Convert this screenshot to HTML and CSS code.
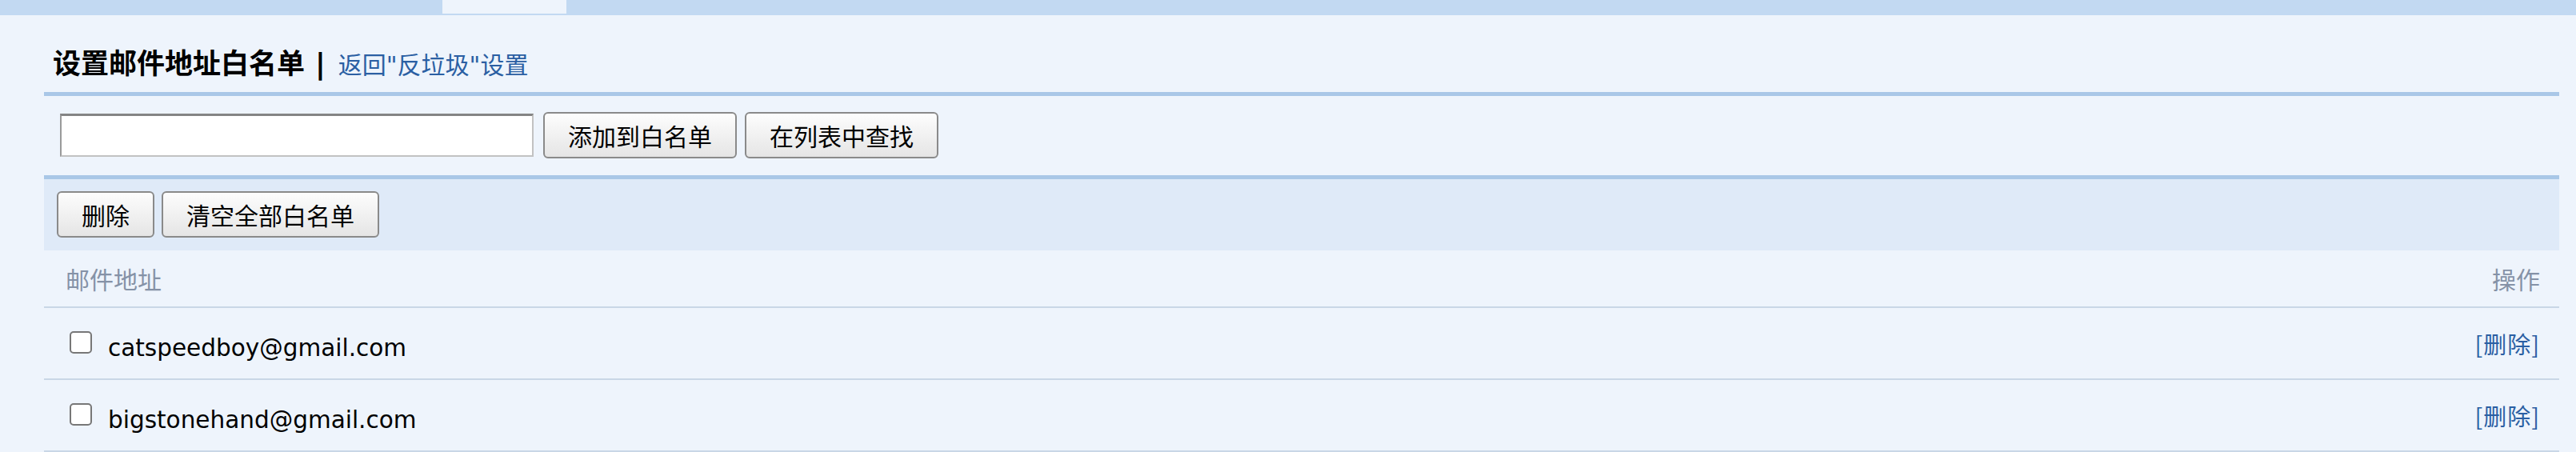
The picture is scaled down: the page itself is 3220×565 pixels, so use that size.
FILE: index.html
```html
<!DOCTYPE html>
<html lang="zh-CN">
<head>
<meta charset="UTF-8">
<title>设置邮件地址白名单</title>
<link rel="stylesheet" href="styles.css">
</head>
<body>

<div class="topbar">
    <div class="tab"></div>
</div>

<div class="main">
    <div class="page-title">
        <b>设置邮件地址白名单</b><span class="sep">|</span><a href="#">返回"反垃圾"设置</a>
    </div>

    <form class="add-bar">
        <input type="text" class="addr-input">
        <button type="button">添加到白名单</button>
        <button type="button">在列表中查找</button>
    </form>

    <div class="toolbar">
        <button type="button">删除</button>
        <button type="button">清空全部白名单</button>
    </div>

    <div class="list">
        <div class="list-head">
            <span>邮件地址</span>
            <span>操作</span>
        </div>
        <div class="list-row">
            <label class="addr"><input type="checkbox"><span class="addr-text">catspeedboy@gmail.com</span></label>
            <a href="#" class="del">[删除]</a>
        </div>
        <div class="list-row">
            <label class="addr"><input type="checkbox"><span class="addr-text">bigstonehand@gmail.com</span></label>
            <a href="#" class="del">[删除]</a>
        </div>
    </div>
</div>

</body>
</html>
```

FILE: styles.css
```css
body {
    margin: 0;
    padding: 0;
    background-color: #eef4fc;
    font-family: "DejaVu Sans", "Noto Sans CJK SC", sans-serif;
    font-size: 30px;
    color: #000;
}
a {
    color: #2b5fa3;
    text-decoration: none;
}
.topbar {
    height: 19px;
    background-color: #c2d9f2;
}
.tab {
    margin-left: 553px;
    width: 155px;
    height: 17px;
    background-color: #eef4fc;
}
.main {
    padding: 0 21px 0 55px;
}
.page-title {
    display: flex;
    align-items: baseline;
    height: 50px;
    padding: 36px 0 10px 11px;
    line-height: 50px;
    border-bottom: 5px solid #a9c7e7;
}
.page-title b {
    font-size: 35px;
}
.sep {
    font-size: 35px;
    font-weight: bold;
    margin: 0 16px 0 13px;
}
.add-bar {
    display: flex;
    align-items: center;
    margin: 0;
    padding: 20px 0 21px 20px;
    border-bottom: 5px solid #a9c7e7;
}
.addr-input {
    width: 592px;
    height: 54px;
    box-sizing: border-box;
    margin: 0 12px 0 0;
    background: #fff;
    border: 2px solid #c2c2c2;
    border-top: 3px solid #848484;
    border-left-color: #9a9a9a;
}
button {
    height: 58px;
    padding: 0 29px;
    margin: 0 10px 0 0;
    font-family: inherit;
    font-size: 30px;
    color: #000;
    border: 2px solid #8a8a8a;
    border-radius: 6px;
    background: linear-gradient(#fdfdfd, #e5e5e5);
    cursor: pointer;
}
.toolbar {
    display: flex;
    align-items: center;
    padding: 15px 16px 16px;
    background-color: #dfeaf8;
}
.toolbar button {
    margin-right: 9px;
}
.list-head {
    display: flex;
    justify-content: space-between;
    align-items: center;
    height: 70px;
    padding: 0 24px 0 27px;
    color: #8592a7;
    border-bottom: 2px solid #c9d7e6;
}
.list-row {
    display: flex;
    justify-content: space-between;
    align-items: center;
    height: 88px;
    padding: 0 24px 0 27px;
    border-bottom: 2px solid #c9d7e6;
}
.addr {
    display: flex;
    align-items: center;
}
.addr input {
    appearance: none;
    width: 28px;
    height: 28px;
    margin: 0 20px 3px 5px;
    background: #fff;
    border: 2px solid #777;
    border-radius: 5px;
}
.addr-text {
    font-size: 29.5px;
    padding-top: 12px;
}
.del {
    font-family: "Noto Sans CJK SC", sans-serif;
    font-size: 29px;
    letter-spacing: 1px;
}
```
